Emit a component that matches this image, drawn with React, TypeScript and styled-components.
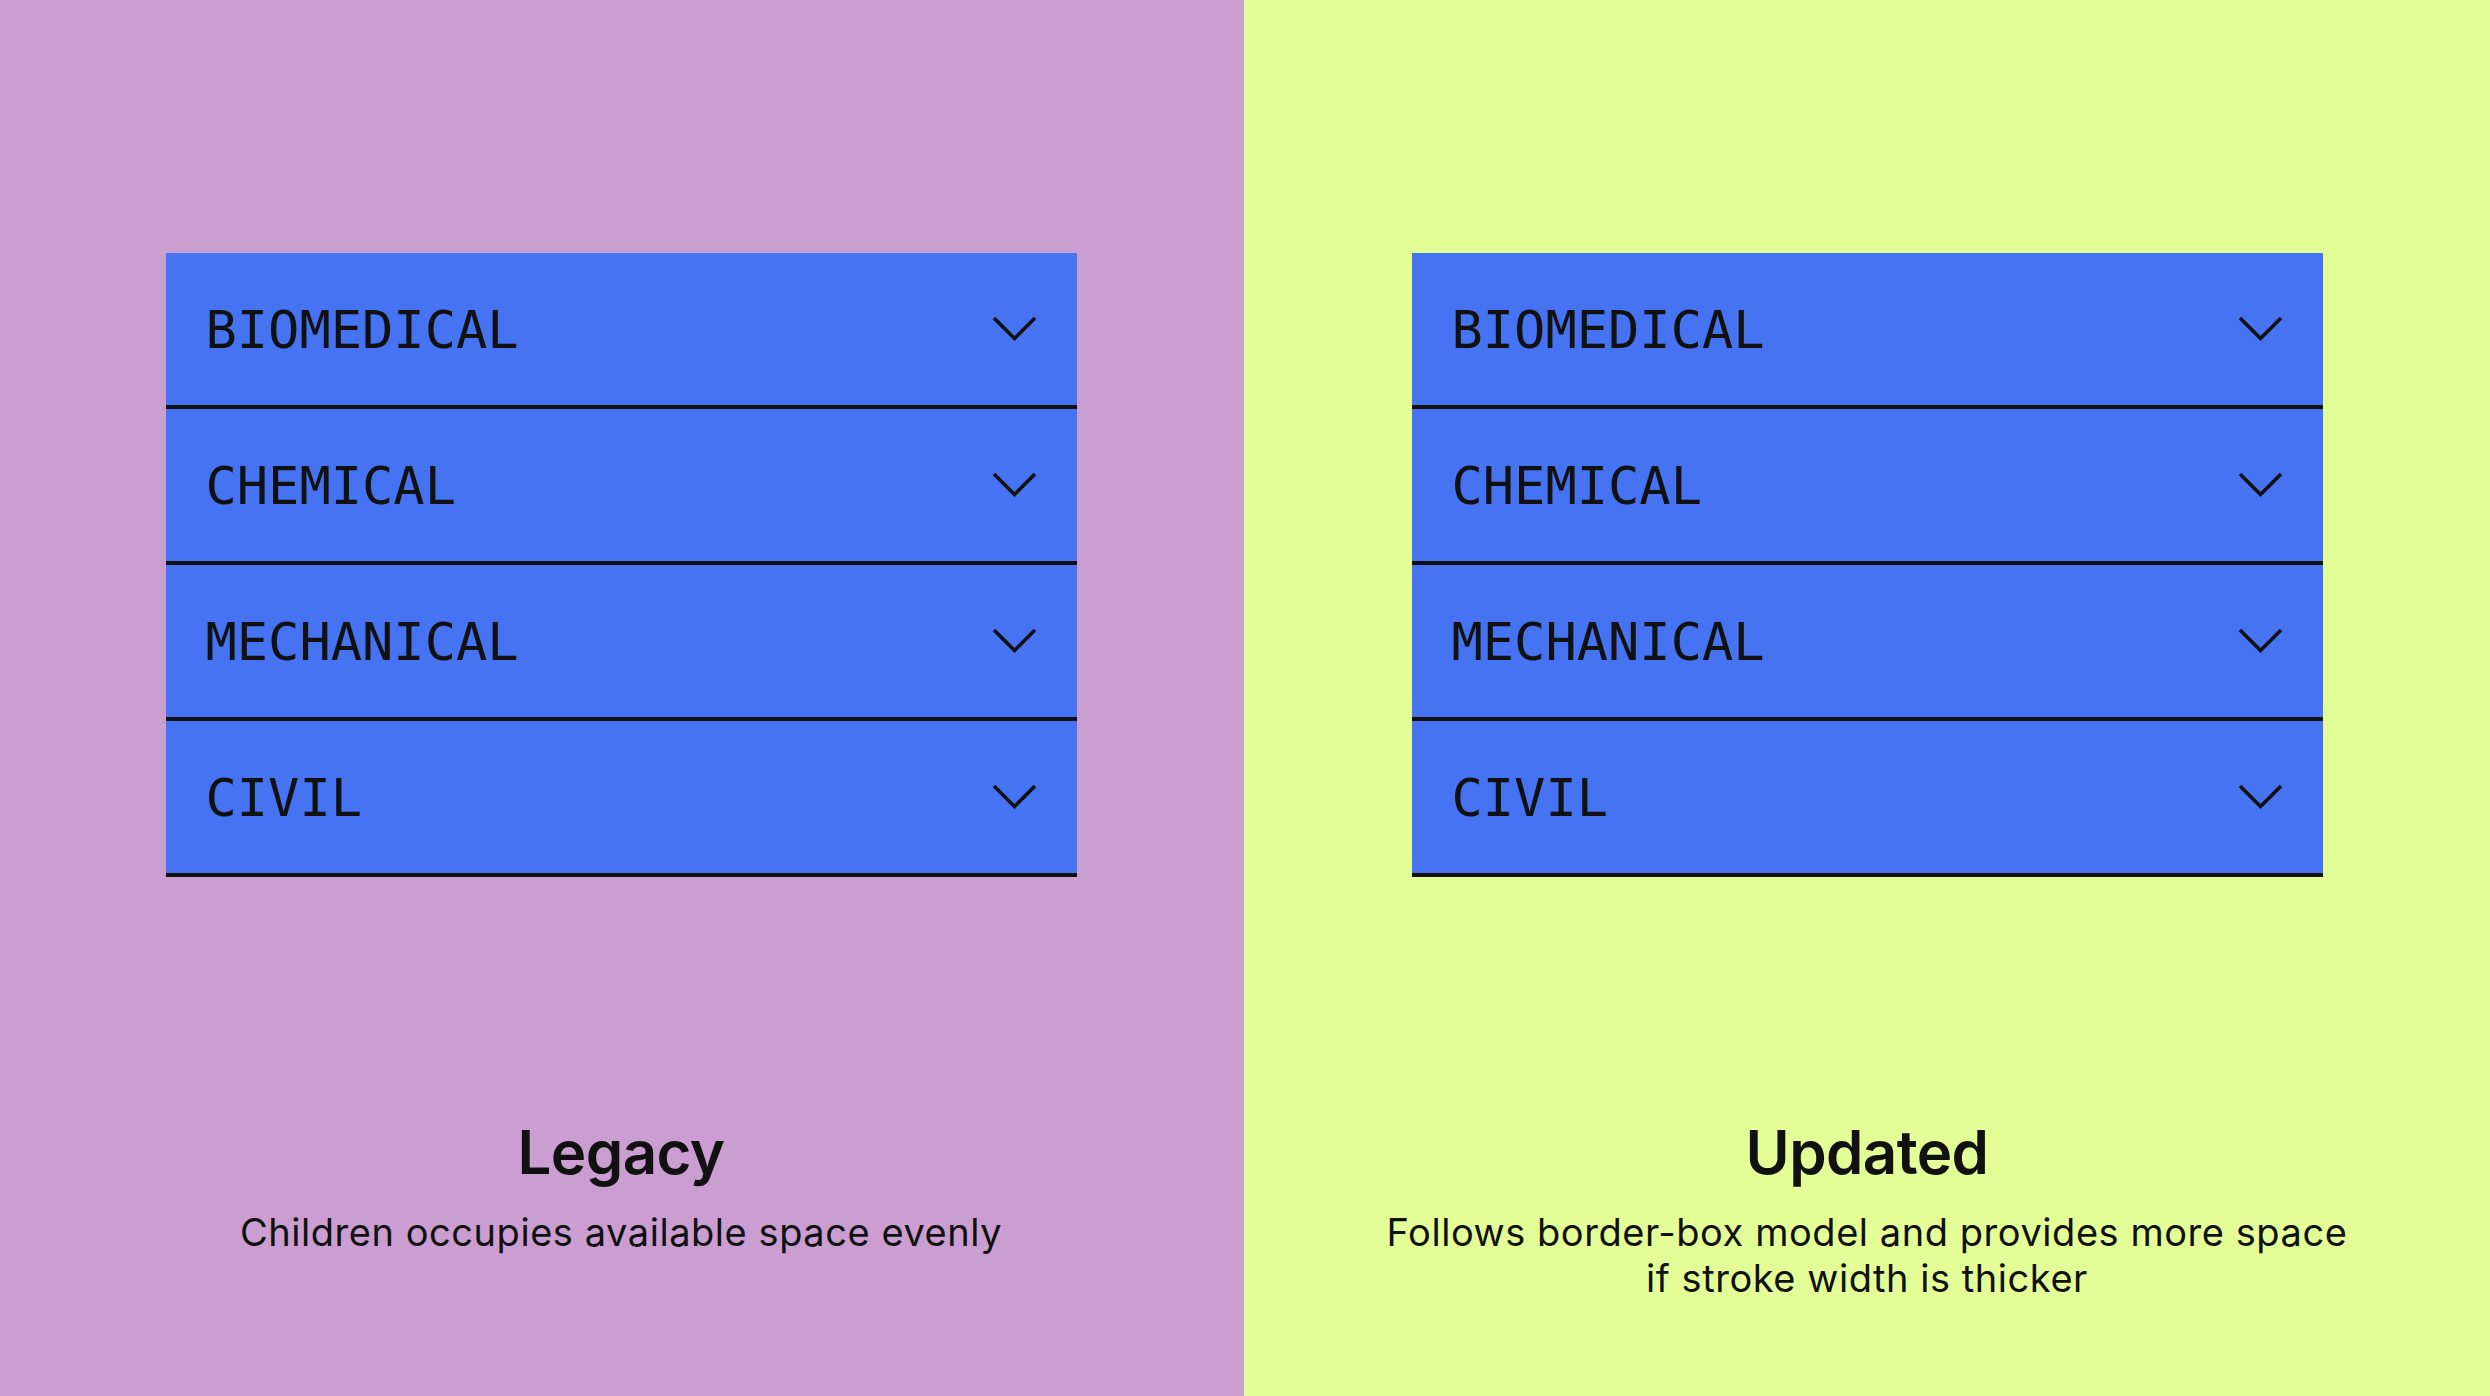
import React from 'react'
import styled, { createGlobalStyle } from 'styled-components'

const GlobalStyle = createGlobalStyle`
    html, body {
        margin: 0;
        padding: 0;
        height: 100%;
    }
    body {
        font-family: Inter, "Noto Sans", sans-serif;
        color: #111111;
    }
    #root {
        height: 100%;
    }
`

const Page = styled.div`
    display: grid;
    grid-template-columns: 1244px 1fr;
    width: 2490px;
    height: 1396px;
    overflow: hidden;
`

const Panel = styled.section<{ $bg: string, $edge?: boolean }>`
    display: flex;
    flex-direction: column;
    align-items: center;
    padding-top: 253px;
    padding-right: ${p => (p.$edge ? '2px' : '0')};
    box-sizing: border-box;
    background-color: ${p => p.$bg};
`

const Accordion = styled.div`
    display: flex;
    flex-direction: column;
    width: 911px;
`

const Item = styled.div`
    height: 156px;
    box-sizing: border-box;
    display: flex;
    align-items: center;
    justify-content: space-between;
    padding: 0 40px 0 40px;
    background-color: #4573f2;
    border-bottom: 4px solid #111111;
`

const Label = styled.span`
    font-family: "DejaVu Sans Mono", "Liberation Mono", monospace;
    font-size: 52px;
    letter-spacing: 0;
    color: #111111;
    padding-top: 2px;
`

const Chevron = styled.svg`
    width: 45px;
    height: 26px;
    flex-shrink: 0;
`

const Caption = styled.div`
    display: flex;
    flex-direction: column;
    align-items: center;
    margin-top: 239px;
    text-align: center;
`

const Title = styled.h2`
    margin: 0;
    font-family: Inter, "Noto Sans", sans-serif;
    font-weight: 600;
    font-size: 60px;
    line-height: 72px;
    letter-spacing: -0.6px;
`

const Note = styled.p`
    margin: 21px 0 0;
    font-family: Inter, "Noto Sans", sans-serif;
    font-weight: 400;
    font-size: 38px;
    line-height: 46px;
    letter-spacing: 0.55px;
`

const items = ['BIOMEDICAL', 'CHEMICAL', 'MECHANICAL', 'CIVIL']

const ChevronDown = () => (
    <Chevron viewBox="0 0 45 26">
        <polyline
            points="2,2 22.5,22.5 43,2"
            fill="none"
            stroke="#111111"
            strokeWidth="3.6"
        />
    </Chevron>
)

interface SideProps {
    bg: string,
    edge?: boolean,
    title: string,
    note: React.ReactNode,
}

const Side = ({ bg, edge, title, note }: SideProps) => (
    <Panel $bg={bg} $edge={edge}>
        <Accordion>
            {items.map(name => (
                <Item key={name}>
                    <Label>{name}</Label>
                    <ChevronDown />
                </Item>
            ))}
        </Accordion>
        <Caption>
            <Title>{title}</Title>
            <Note>{note}</Note>
        </Caption>
    </Panel>
)

export default function App() {
    return (
        <>
            <GlobalStyle />
            <Page>
                <Side
                    bg="#ca9ed1"
                    edge
                    title="Legacy"
                    note="Children occupies available space evenly"
                />
                <Side
                    bg="#e3fd97"
                    title="Updated"
                    note={<>Follows border-box model and provides more space<br />if stroke width is thicker</>}
                />
            </Page>
        </>
    )
}
